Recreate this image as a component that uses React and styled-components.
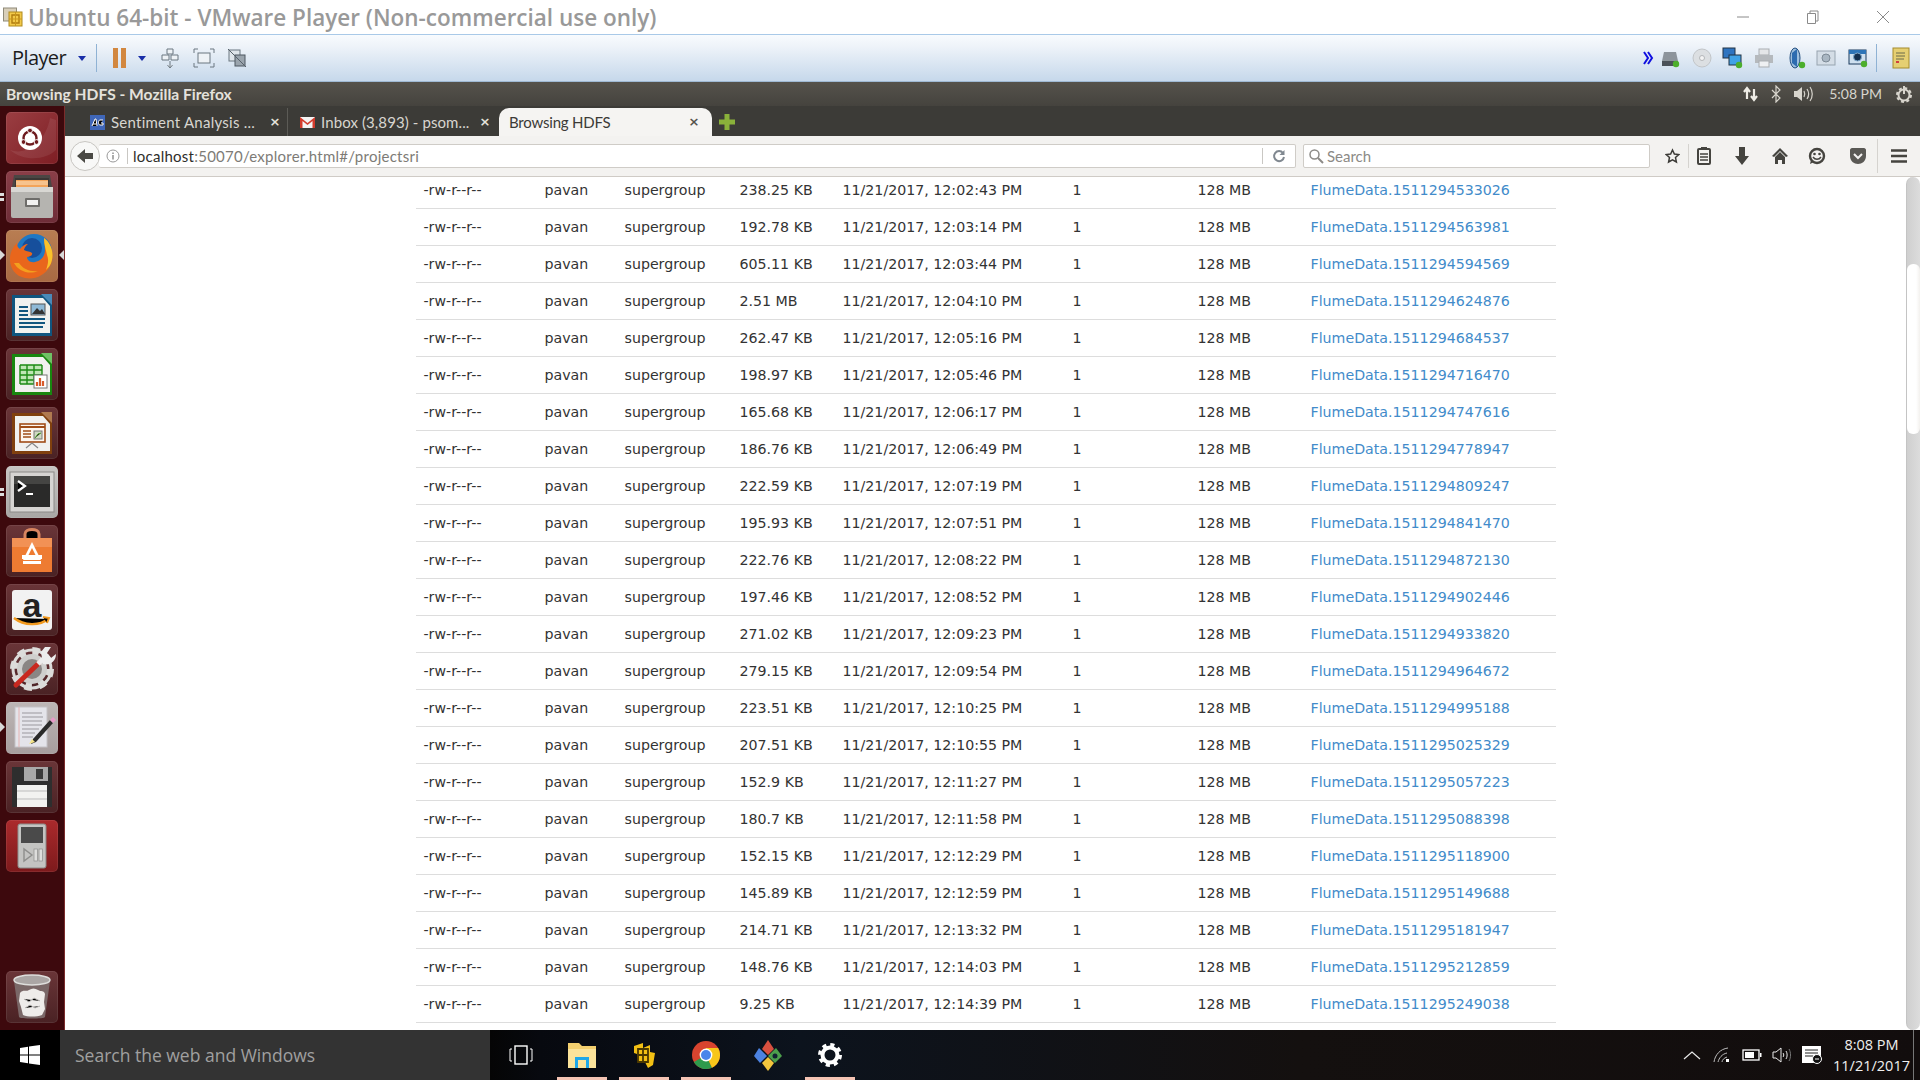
import React from "react";
import styled, {createGlobalStyle} from "styled-components";

const GlobalStyle = createGlobalStyle`
    html, body {
        margin: 0;
        padding: 0;
        width: 1920px;
        height: 1080px;
        overflow: hidden;
        background: #fff;
    }
`;

const uiFont = `"Lato", "Noto Sans", sans-serif`;
const winFont = `"Open Sans", "Noto Sans", sans-serif`;

const Screen = styled.div`
    width: 1920px;
    height: 1080px;
    display: flex;
    flex-direction: column;
    overflow: hidden;
`;

const Spacer = styled.span`
    width: ${props => props.$w}px;
    flex: none;
`;

/* VMware window chrome */
const TitleBar = styled.div`
    height: 34px;
    flex: none;
    display: flex;
    align-items: center;
    padding-left: 3px;
    background: #fff;
    box-sizing: border-box;
`;

const TitleText = styled.div`
    margin-left: 5px;
    padding-top: 2px;
    font: 600 22.5px/32px ${winFont};
    color: #999;
    white-space: nowrap;
`;

const WindowControls = styled.div`
    margin-left: auto;
    display: grid;
    grid-template-columns: repeat(3, 70px);
    justify-items: center;
    margin-right: 2px;
`;

const VmToolbar = styled.div`
    height: 48px;
    flex: none;
    box-sizing: border-box;
    display: flex;
    align-items: center;
    border-top: 1px solid #a9c9e8;
    border-bottom: 1px solid #9fb9d3;
    background: linear-gradient(#f8fbfe, #eef3f9 25%, #c6d8eb);
    padding-left: 12px;
`;

const PlayerLabel = styled.div`
    font: 400 20px/46px ${winFont};
    color: #1c1c1c;
    width: 60px;
    letter-spacing: -0.6px;
`;

const ToolSeparator = styled.div`
    width: 1px;
    height: 28px;
    background: #8fb2d4;
    margin: ${props => props.$margin || "0"};
`;

const DropArrow = styled.div`
    width: 0;
    height: 0;
    border-left: 4px solid transparent;
    border-right: 4px solid transparent;
    border-top: 5px solid #1a2ea8;
    margin: ${props => props.$margin || "0"};
`;

const PauseIcon = styled.div`
    width: 13px;
    height: 20px;
    margin-left: 16px;
    background: linear-gradient(90deg, #d2873f 0 5px, transparent 5px 8px, #d2873f 8px);
`;

const ToolIcon = styled.div`
    width: 22px;
    height: 22px;
    margin: ${props => props.$margin || "0"};
    display: flex;
`;

const VmDevices = styled.div`
    margin-left: auto;
    display: flex;
    align-items: center;
`;

/* guest desktop */
const Guest = styled.div`
    flex: 1;
    min-height: 0;
    display: flex;
    flex-direction: column;
`;

const PanelBar = styled.div`
    height: 24px;
    flex: none;
    display: flex;
    align-items: center;
    padding-left: 6px;
    background: linear-gradient(#55524b, #45433e);
    font: 700 15.6px/24px ${uiFont};
    color: #e4e2dc;
`;

const PanelTray = styled.div`
    margin-left: auto;
    display: flex;
    align-items: center;
    font: 400 14px/24px ${uiFont};
    color: #d8d5cd;
`;

const GuestBody = styled.div`
    flex: 1;
    min-height: 0;
    display: flex;
`;

const Launcher = styled.div`
    width: 65px;
    flex: none;
    box-sizing: border-box;
    padding: 6px 0 7px 6px;
    display: flex;
    flex-direction: column;
    gap: 7px;
    background: #3d090d;
    border-right: 1px solid #7c2b2b;
`;

const Tile = styled.div`
    width: 52px;
    height: 52px;
    flex: none;
    border-radius: 5px;
    position: relative;
    background: ${props => props.$bg || "linear-gradient(#6a3538, #4a2224)"};
    box-shadow: inset 0 0 0 1px rgba(255, 255, 255, 0.08);
    margin-top: ${props => props.$pushDown ? "auto" : "0"};
`;

const TileArt = styled.svg`
    display: block;
    width: 52px;
    height: 52px;
`;

const Pips = styled.div`
    position: absolute;
    left: -6px;
    top: 22px;
    display: flex;
    flex-direction: column;
    gap: 2px;
    &::before, &::after {
        content: "";
        width: 4px;
        height: 3px;
        background: #ddd;
    }
`;

const ArrowLeft = styled.div`
    position: absolute;
    left: -6px;
    top: 20px;
    width: 0;
    height: 0;
    border-top: 5px solid transparent;
    border-bottom: 5px solid transparent;
    border-left: 5px solid #d8d8d8;
`;

const ArrowRight = styled.div`
    position: absolute;
    right: -6px;
    top: 20px;
    width: 0;
    height: 0;
    border-top: 5px solid transparent;
    border-bottom: 5px solid transparent;
    border-right: 5px solid #d8d8d8;
`;

const Browser = styled.div`
    flex: 1;
    min-width: 0;
    display: flex;
    flex-direction: column;
`;

const TabStrip = styled.div`
    height: 30px;
    flex: none;
    display: flex;
    align-items: flex-end;
    background: #3c3b37;
    padding-left: 13px;
    font: 400 15px/27px ${uiFont};
`;

const Tab = styled.div`
    width: ${props => props.$width}px;
    height: 28px;
    flex: none;
    box-sizing: border-box;
    display: flex;
    align-items: center;
    padding-left: ${props => props.$active ? "10px" : "12px"};
    padding-right: ${props => props.$active ? "6px" : "0"};
    color: ${props => props.$active ? "#3c3b37" : "#d8d6d0"};
    background: ${props => props.$active ? "#f5f4f2" : "transparent"};
    border-radius: ${props => props.$active ? "10px 10px 0 0" : "0"};
    margin-left: ${props => props.$active ? "2px" : "0"};
    border-right: ${props => props.$divider ? "1px solid #5c5b56" : "none"};
`;

const TabFavicon = styled.svg`
    width: 15px;
    height: 15px;
    flex: none;
    margin-right: 6px;
`;

const TabTitle = styled.span`
    flex: 1;
    white-space: nowrap;
    letter-spacing: ${props => props.$spacing || 0}px;
`;

const TabClose = styled.span`
    flex: none;
    width: 24px;
    text-align: center;
    font: 700 13px/28px "DejaVu Sans", sans-serif;
    color: ${props => props.$active ? "#55534e" : "#e4e2dc"};
`;

const NewTab = styled.svg`
    width: 16px;
    height: 16px;
    margin: 0 0 6px 7px;
`;

const NavBar = styled.div`
    height: 41px;
    flex: none;
    box-sizing: border-box;
    display: flex;
    align-items: center;
    background: #f3f2f0;
    border-bottom: 1px solid #cfcbc6;
    padding-left: 5px;
`;

const BackButton = styled.div`
    width: 30px;
    height: 30px;
    flex: none;
    box-sizing: border-box;
    border-radius: 50%;
    border: 1px solid #c8c6c2;
    background: #f8f8f7;
    display: flex;
    align-items: center;
    justify-content: center;
    margin-right: -1px;
    position: relative;
    z-index: 1;
`;

const FieldBox = styled.div`
    height: 24px;
    box-sizing: border-box;
    display: flex;
    align-items: center;
    background: #fff;
    border: 1px solid #cfccc7;
    border-radius: 2px;
    font: 400 15px/22px ${uiFont};
    color: #7d7b76;
`;

const UrlBox = styled(FieldBox)`
    width: 1197px;
    padding-left: 7px;
    border-left: none;
    letter-spacing: 0.25px;
`;

const SearchBox = styled(FieldBox)`
    width: 347px;
    margin-left: 7px;
    padding-left: 4px;
    color: #8c8a86;
`;

const InfoIcon = styled.svg`
    width: 14px;
    height: 14px;
    flex: none;
`;

const UrlDivider = styled.div`
    width: 1px;
    height: 16px;
    background: #c9c7c3;
    margin: ${props => props.$margin};
`;

const UrlHost = styled.span`
    color: #2e2d2a;
`;

const NavIcons = styled.div`
    display: flex;
    align-items: center;
    margin-left: 15px;
`;

const NavSlot = styled.div`
    width: ${props => props.$width}px;
    flex: none;
    display: flex;
    justify-content: center;
    align-items: center;
`;

const NavDivider = styled.div`
    width: 1px;
    height: ${props => props.$height || 20}px;
    background: #d5d3cf;
`;

const Page = styled.div`
    flex: 1;
    min-height: 0;
    background: #fff;
    display: flex;
    overflow: hidden;
`;

const PageBody = styled.div`
    flex: 1;
    min-width: 0;
`;

const FileTable = styled.div`
    width: 1140px;
    margin: -5px auto 0;
    font: 400 14.2px/36px "DejaVu Sans", sans-serif;
    color: #333;
`;

const FileRow = styled.div`
    height: 37px;
    box-sizing: border-box;
    display: grid;
    grid-template-columns: 121px 80px 115px 103px 230px 125px 113px 1fr;
    padding-left: 8px;
    border-bottom: 1px solid #ddd;
    white-space: nowrap;
`;

const FileLink = styled.span`
    color: #428bca;
`;

const ScrollTrack = styled.div`
    width: 14px;
    flex: none;
    box-sizing: border-box;
    padding-top: 87px;
    background: linear-gradient(90deg, #cfcfcf, #dcdcdc);
    border-radius: 7px;
    border-left: 1px solid #c4c4c4;
`;

const ScrollThumb = styled.div`
    height: 170px;
    background: linear-gradient(90deg, #fff 70%, #f3f1ee);
    border-radius: 6px;
`;

/* windows taskbar */
const Taskbar = styled.div`
    height: 50px;
    flex: none;
    display: flex;
    align-items: center;
    background: linear-gradient(90deg, #050505 0 490px, #07090f 540px, #0c131d 800px, #14100f 1300px, #120d0d);
`;

const StartButton = styled.div`
    width: 60px;
    height: 50px;
    flex: none;
    background: #000;
    display: flex;
    align-items: center;
    justify-content: center;
`;

const SearchField = styled.div`
    width: 430px;
    height: 50px;
    flex: none;
    box-sizing: border-box;
    padding-left: 15px;
    background: #333;
    color: #a0a0a0;
    font: 400 17.5px/50px ${winFont};
`;

const TaskSlot = styled.div`
    width: ${props => props.$width || 62}px;
    height: 50px;
    flex: none;
    display: flex;
    align-items: center;
    justify-content: center;
    position: relative;
    ${props => props.$open && `
        &::after {
            content: "";
            position: absolute;
            left: 6px;
            right: 6px;
            bottom: 0;
            height: 3px;
            background: #f4c4b4;
        }
    `}
`;

const TaskIcons = styled.div`
    display: flex;
`;

const SysTray = styled.div`
    margin-left: auto;
    display: flex;
    align-items: center;
    height: 50px;
    padding-right: 6px;
`;

const TraySlot = styled.div`
    width: 30px;
    display: flex;
    justify-content: center;
`;

const Clock = styled.div`
    width: 84px;
    margin-left: 3px;
    text-align: center;
    font: 400 14.5px/21px ${winFont};
    color: #f0f0f0;
    border-right: 1px solid #777;
    height: 50px;
    box-sizing: border-box;
    padding-top: 4px;
    white-space: nowrap;
`;

const Sp = ({w = 22, h = 22, vb, children}) => (
    <svg width={w} height={h} viewBox={vb || `0 0 ${w} ${h}`} fill="none">{children}</svg>
);

/* launcher art */
const UbuntuArt = () => (
    <TileArt viewBox="0 0 52 52">
        <path d="M4 38C20 44 40 30 44 6l6 2v30c-10 10-32 12-46 0z" fill="#fff" opacity=".08"/>
        <circle cx="24" cy="26" r="12" fill="#fff"/>
        <circle cx="24" cy="26" r="6.500" fill="none" stroke="#6e1a1e" strokeWidth="2.400"/>
        <circle cx="24" cy="18.500" r="2.400" fill="#6e1a1e" stroke="#fff"/>
        <circle cx="17.500" cy="30" r="2.400" fill="#6e1a1e" stroke="#fff"/>
        <circle cx="30.500" cy="30" r="2.400" fill="#6e1a1e" stroke="#fff"/>
    </TileArt>
);

const FilesArt = () => (
    <TileArt viewBox="0 0 52 52">
        <path d="M8 4h36l2 12H6z" fill="#4a4644"/>
        <path d="M9 7h34v9H9z" fill="#3a3634"/>
        <path d="M10 9h32v7H10z" fill="#f2a45a"/>
        <path d="M10 11h32M10 13h32" stroke="#fbe2c0" strokeWidth="1"/>
        <rect x="5" y="16" width="42" height="31" rx="2" fill="#b5b4b0"/>
        <rect x="5" y="16" width="42" height="5" fill="#d8d7d3"/>
        <rect x="19" y="27" width="15" height="9" rx="1" fill="#6e6d6a"/>
        <rect x="21" y="29" width="11" height="5" fill="#f1f1f0"/>
    </TileArt>
);

const FirefoxArt = () => (
    <TileArt viewBox="0 0 52 52">
        <circle cx="28" cy="22" r="18" fill="#1f78c4"/>
        <circle cx="26" cy="18" r="10" fill="#164f9c"/>
        <path d="M38 8c8 6 11 18 6 28-5 10-16 14-25 12C9 46 3 37 4 27c1-7 4-11 7-14 0 3 1 5 3 6 2-3 5-5 8-5-3 2-4 5-4 6 3 2 6 1 8 3 1 2-2 4-5 4 0 3 3 6 8 5 6-1 10-6 10-12 0-5-1-9-1-12z" fill="#e9661c"/>
        <path d="M38 8c6 4 10 13 8 22-1 5-4 8-6 10 2-6 3-10 1-15-1-5-3-10-3-17z" fill="#f9c22b"/>
        <path d="M8 33c4 8 15 12 24 8-8 1-15-2-19-8z" fill="#f3a01e"/>
    </TileArt>
);

const OfficeArt = ({edge, corner, children}) => (
    <TileArt viewBox="0 0 52 52">
        <path d="M6 6h34l6 6v35H6z" fill={edge}/>
        <path d="M9 9h28l7 8v27H9z" fill="#f1f1ef"/>
        <path d="M35 5h11v11z" fill={corner}/>
        {children}
    </TileArt>
);

const WriterArt = () => (
    <OfficeArt edge="#10557f" corner="#4a8ab8">
        <path d="M13 18h9M13 22h9M13 26h9M13 30h26M13 34h26M13 38h24" stroke="#11567f" strokeWidth="2"/>
        <rect x="25" y="15" width="14" height="11" fill="#8fb9d6" stroke="#555"/>
        <path d="M26 25l5-6 3 3 2-2 3 5z" fill="#333"/>
    </OfficeArt>
);

const CalcArt = () => (
    <OfficeArt edge="#18870f" corner="#6fc265">
        <path d="M14 17h22v19H14z" fill="#bfe6b5"/>
        <path d="M14 17h22M14 22h22M14 27h22M14 32h22M14 36h22M14 17v19M21 17v19M28 17v19M36 17v19" stroke="#1c8a14" strokeWidth="1.400"/>
        <rect x="28" y="27" width="13" height="13" fill="#fff" stroke="#777"/>
        <path d="M31 38v-4M34 38v-8M37 38v-5" strokeWidth="2.200" stroke="#d85a2a"/>
    </OfficeArt>
);

const ImpressArt = () => (
    <OfficeArt edge="#80400e" corner="#b07a50">
        <rect x="14" y="17" width="25" height="18" fill="#fdf6ee" stroke="#a04d17" strokeWidth="1.600"/>
        <path d="M14 20h25" stroke="#a04d17" strokeWidth="2"/>
        <path d="M17 24h8M17 27h8M17 30h8" stroke="#a04d17" strokeWidth="1.600"/>
        <rect x="28" y="24" width="8" height="8" fill="#cfd9c2" stroke="#777"/>
        <path d="M29 31l3-4 3-1" stroke="#4a9a2a"/>
        <path d="M26 36l-6 5M26 36l6 5" stroke="#888" strokeWidth="1.200"/>
    </OfficeArt>
);

const TerminalArt = () => (
    <TileArt viewBox="0 0 52 52">
        <rect x="4" y="6" width="44" height="40" fill="#d6d4d2" stroke="#8c8a88"/>
        <rect x="8" y="10" width="36" height="31" fill="#2a2a29"/>
        <path d="M8 10h36v8H8z" fill="#454543"/>
        <path d="M12 15l7 5-7 5" stroke="#fff" strokeWidth="2.200"/>
        <path d="M20 28h7" stroke="#fff" strokeWidth="2"/>
    </TileArt>
);

const SoftwareArt = () => (
    <TileArt viewBox="0 0 52 52">
        <path d="M19 14v-5c0-6 14-6 14 0v5" stroke="#d88560" strokeWidth="3"/>
        <path d="M6 13h40v34H6z" fill="#ee7b32"/>
        <path d="M6 13h40v9H6z" fill="#f29155"/>
        <path d="M26 17l9 18h-18z" fill="#fff"/>
        <path d="M26 23l4 8h-8z" fill="#ee7b32"/>
        <rect x="16" y="30" width="20" height="4" fill="#fff"/>
        <rect x="17" y="36" width="18" height="3" fill="#fff"/>
    </TileArt>
);

const AmazonArt = () => (
    <TileArt viewBox="0 0 52 52">
        <rect x="6" y="6" width="40" height="40" rx="3" fill="#f2f2f2"/>
        <text x="26" y="33" textAnchor="middle" fontFamily="Liberation Sans" fontWeight="700" fontSize="34" fill="#222">a</text>
        <path d="M8 34c10 8 26 8 34 1" stroke="#f29a1f" strokeWidth="2.400"/>
        <path d="M37 33l6 1-2 5" stroke="#f29a1f" strokeWidth="2"/>
    </TileArt>
);

const SettingsArt = () => (
    <TileArt viewBox="0 0 52 52">
        <circle cx="26" cy="26" r="19" fill="none" stroke="#dcdcda" strokeWidth="3"/>
        <circle cx="26" cy="26" r="18" fill="none" stroke="#dcdcda" strokeWidth="8" strokeDasharray="7 7.100"/>
        <circle cx="26" cy="26" r="15" fill="#cfcfcd"/>
        <circle cx="26" cy="26" r="10" fill="#8a8684"/>
        <path d="M10 42l23-22" stroke="#c8281f" strokeWidth="5" strokeLinecap="round"/>
        <path d="M32 21l5-5" stroke="#ececec" strokeWidth="5"/>
        <path d="M35 9l4-5 6 0-4 6 4 5 5-4c0 7-6 12-13 10z" fill="#ececec"/>
    </TileArt>
);

const EditorArt = () => (
    <TileArt viewBox="0 0 52 52">
        <rect x="9" y="5" width="32" height="40" fill="#e4e4ea" stroke="#c4c2c6"/>
        <path d="M13 5v40" stroke="#e6b4b4"/>
        <path d="M16 11h20M16 15h21M16 19h20M16 23h20M16 27h17M16 31h13M16 35h11" stroke="#9a989e"/>
        <path d="M27 37l17-19 3 3-17 19-5 2z" fill="#2a2a2a"/>
        <path d="M44 18l3-3 3 3-3 3z" fill="#e79ac8"/>
        <path d="M26 37l3 3-6 2z" fill="#f3e38a"/>
    </TileArt>
);

const FloppyArt = () => (
    <TileArt viewBox="0 0 52 52">
        <path d="M6 6h40v40H6z" fill="#2e2e2e"/>
        <rect x="18" y="6" width="24" height="14" fill="#a8a8a8"/>
        <rect x="30" y="8" width="7" height="10" fill="#3a3a3a"/>
        <rect x="11" y="24" width="30" height="22" fill="#f2f2f0"/>
        <path d="M11 30h30M11 38h30" stroke="#bbb"/>
    </TileArt>
);

const PlayerArt = () => (
    <TileArt viewBox="0 0 52 52">
        <rect x="12" y="4" width="28" height="44" rx="2" fill="#c4c4c2" stroke="#8a8a88"/>
        <rect x="15" y="7" width="22" height="16" fill="#4a4a4a"/>
        <path d="M18 29v12l8-6z" fill="none" stroke="#8e8e8c" strokeWidth="1.400"/>
        <rect x="28" y="29" width="3.500" height="12" fill="#dededc" stroke="#8e8e8c" strokeWidth=".7"/>
        <rect x="33" y="29" width="3.500" height="12" fill="#dededc" stroke="#8e8e8c" strokeWidth=".7"/>
    </TileArt>
);

const TrashArt = () => (
    <TileArt viewBox="0 0 52 52">
        <path d="M8 10l5 36c0 2 26 2 26 0l5-36z" fill="#7a6868"/>
        <ellipse cx="26" cy="9" rx="18" ry="5" fill="#aba6a5" stroke="#dededc" strokeWidth="1.500"/>
        <path d="M14 22c3-4 6-1 9-3s6-2 9 0 6 0 7 4l-1 8 1 7-3 6c-6 2-14 2-19 0l-2-8-2-6z" fill="#eeecea"/>
        <path d="M18 28l5 3 5-4 6 3M19 37l5-3 5 3 5-2" stroke="#bcbab8"/>
    </TileArt>
);

const launcherItems = [
    {art: UbuntuArt, bg: "linear-gradient(135deg, #9a3e42, #7e1e24)"},
    {art: FilesArt, bg: "linear-gradient(#8a3e48, #6e2d38)", pips: true},
    {art: FirefoxArt, bg: "linear-gradient(#b87d52, #a96a43)", active: true},
    {art: WriterArt},
    {art: CalcArt},
    {art: ImpressArt},
    {art: TerminalArt, bg: "linear-gradient(#c8c6c4, #a8a6a4)", pips: true},
    {art: SoftwareArt},
    {art: AmazonArt},
    {art: SettingsArt},
    {art: EditorArt, bg: "linear-gradient(#bdb6b6, #a79e9e)", arrow: true},
    {art: FloppyArt},
    {art: PlayerArt, bg: "linear-gradient(#ab2a2c, #7d1a1c)"},
    {art: TrashArt, pushDown: true},
];

const rows = [
    ["238.25 KB", "12:02:43", "1511294533026"],
    ["192.78 KB", "12:03:14", "1511294563981"],
    ["605.11 KB", "12:03:44", "1511294594569"],
    ["2.51 MB", "12:04:10", "1511294624876"],
    ["262.47 KB", "12:05:16", "1511294684537"],
    ["198.97 KB", "12:05:46", "1511294716470"],
    ["165.68 KB", "12:06:17", "1511294747616"],
    ["186.76 KB", "12:06:49", "1511294778947"],
    ["222.59 KB", "12:07:19", "1511294809247"],
    ["195.93 KB", "12:07:51", "1511294841470"],
    ["222.76 KB", "12:08:22", "1511294872130"],
    ["197.46 KB", "12:08:52", "1511294902446"],
    ["271.02 KB", "12:09:23", "1511294933820"],
    ["279.15 KB", "12:09:54", "1511294964672"],
    ["223.51 KB", "12:10:25", "1511294995188"],
    ["207.51 KB", "12:10:55", "1511295025329"],
    ["152.9 KB", "12:11:27", "1511295057223"],
    ["180.7 KB", "12:11:58", "1511295088398"],
    ["152.15 KB", "12:12:29", "1511295118900"],
    ["145.89 KB", "12:12:59", "1511295149688"],
    ["214.71 KB", "12:13:32", "1511295181947"],
    ["148.76 KB", "12:14:03", "1511295212859"],
    ["9.25 KB", "12:14:39", "1511295249038"],
];

const VmLogo = () => (
    <Sp w={20} h={20}>
        <rect x="0.5" y="1" width="13" height="13" fill="#d8cfba" stroke="#8f8a78"/>
        <rect x="6" y="5" width="13" height="14" fill="#f2c94a" stroke="#b08a1c"/>
        <path d="M9 8h7v8H9z" stroke="#b07c10" strokeWidth="1.400"/>
        <path d="M6 12h13M12.500 5v14" stroke="#c9971e"/>
    </Sp>
);

const DeviceStrip = () => (
    <VmDevices>
        <Sp w={12} h={16}>
            <path d="M2 2l4 6-4 6M6 2l4 6-4 6" stroke="#1010e0" strokeWidth="2"/>
        </Sp>
        <ToolIcon $margin="0 0 0 5px">
            <Sp>
                <path d="M5 5h12l2 9H3z" fill="#8d949b"/>
                <rect x="3" y="14" width="16" height="5" fill="#4b5159"/>
                <circle cx="17" cy="17" r="3.200" fill="#4cae2c"/>
            </Sp>
        </ToolIcon>
        <ToolIcon $margin="0 0 0 10px">
            <Sp>
                <circle cx="11" cy="11" r="9" fill="#dcdfe2" stroke="#c2c5c8"/>
                <circle cx="11" cy="11" r="2.500" fill="#f4f4f4" stroke="#b4b7ba"/>
            </Sp>
        </ToolIcon>
        <ToolIcon $margin="0 0 0 9px">
            <Sp>
                <rect x="1" y="1" width="12" height="10" fill="#2f74c0" stroke="#234"/>
                <rect x="7" y="8" width="12" height="10" fill="#41a2e6" stroke="#234"/>
                <circle cx="17" cy="18" r="3.200" fill="#4cae2c"/>
            </Sp>
        </ToolIcon>
        <ToolIcon $margin="0 0 0 9px">
            <Sp>
                <rect x="6" y="2" width="10" height="6" fill="#e4e6e8" stroke="#a9adb1"/>
                <rect x="2" y="8" width="18" height="8" fill="#b5b9bd"/>
                <rect x="6" y="14" width="10" height="6" fill="#eef0f2" stroke="#a9adb1"/>
            </Sp>
        </ToolIcon>
        <ToolIcon $margin="0 0 0 10px">
            <Sp>
                <ellipse cx="10" cy="11" rx="5" ry="10" fill="#9fc0de" stroke="#234f80"/>
                <path d="M7 6l5-4v18l-5-4z" fill="#2d6cb0"/>
                <circle cx="17" cy="18" r="3.200" fill="#4cae2c"/>
            </Sp>
        </ToolIcon>
        <ToolIcon $margin="0 0 0 8px">
            <Sp>
                <rect x="2" y="4" width="18" height="14" fill="#d4dde6" stroke="#97a4b0"/>
                <circle cx="11" cy="11" r="4" fill="#a9b6c2" stroke="#7d8a96"/>
            </Sp>
        </ToolIcon>
        <ToolIcon $margin="0 0 0 10px">
            <Sp>
                <rect x="2" y="3" width="17" height="14" fill="#cfe0ef" stroke="#1b3a5c"/>
                <rect x="2" y="3" width="17" height="4" fill="#2e75b8"/>
                <circle cx="10.500" cy="10" r="4" fill="#14304f" stroke="#7fa9cc"/>
                <circle cx="17" cy="17" r="3.200" fill="#4cae2c"/>
            </Sp>
        </ToolIcon>
        <ToolSeparator $margin="0 0 0 7px"/>
        <ToolIcon $margin="0 7px 0 14px">
            <Sp>
                <rect x="2" y="1" width="16" height="20" fill="#e5cf72" stroke="#a68c2c"/>
                <path d="M5 6h9M5 9h9M5 12h8" stroke="#6b6b4b"/>
                <path d="M5 15h3" stroke="#d04040" strokeWidth="2"/>
            </Sp>
        </ToolIcon>
    </VmDevices>
);

const PanelIcons = () => (
    <PanelTray>
        <Sp w={16} h={18}>
            <path d="M4 14V4M1 7l3-4 3 4" stroke="#efede6" strokeWidth="2.200"/>
            <path d="M11 4v10M8 11l3 4 3-4" stroke="#efede6" strokeWidth="2.200"/>
        </Sp>
        <Spacer $w={11}/>
        <Sp w={12} h={18}>
            <path d="M2 5l8 8-4 4V1l4 4-8 8" stroke="#d8d5cd" strokeWidth="1.200"/>
        </Sp>
        <Spacer $w={11}/>
        <Sp w={20} h={18}>
            <path d="M1 6h3l5-4v14l-5-4H1z" fill="#d8d5cd"/>
            <path d="M11 6c1 2 1 4 0 6M14 4c2 3 2 7 0 10M17 2c3 4 3 10 0 14" stroke="#d8d5cd" strokeWidth="1.200"/>
        </Sp>
        <Spacer $w={16}/>
        <span>5:08 PM</span>
        <Spacer $w={13}/>
        <Sp w={18} h={18}>
            <circle cx="9" cy="10" r="5.500" stroke="#d8d5cd" strokeWidth="2"/>
            <circle cx="9" cy="10" r="7" stroke="#d8d5cd" strokeWidth="2" strokeDasharray="3 2.500"/>
            <path d="M9 1v8" stroke="#d8d5cd" strokeWidth="2"/>
        </Sp>
        <Spacer $w={7}/>
    </PanelTray>
);

const NavStrip = () => (
    <NavIcons>
        <NavSlot $width={15}>
            <Sp w={20} h={20}>
                <path d="M10 2l2.500 5.400 5.800.7-4.300 4 1.200 5.800L10 15l-5.200 2.900L6 12 1.700 8.100l5.800-.7z" stroke="#3c3b37" strokeWidth="2"/>
            </Sp>
        </NavSlot>
        <NavSlot $width={8}/>
        <NavDivider $height={24}/>
        <NavSlot $width={30}>
            <Sp w={16} h={20}>
                <rect x="2" y="3" width="12" height="15" rx="1" stroke="#45443f" strokeWidth="2"/>
                <rect x="5" y="1" width="6" height="3" fill="#45443f"/>
                <path d="M4 8h8M4 11h8M4 14h8" stroke="#45443f" strokeWidth="1.500"/>
            </Sp>
        </NavSlot>
        <NavSlot $width={46}>
            <Sp w={16} h={20}>
                <path d="M5 1h6v9h4l-7 9-7-9h4z" fill="#45443f"/>
            </Sp>
        </NavSlot>
        <NavSlot $width={30}>
            <Sp w={18} h={18}>
                <path d="M9 1L1 9l2 1 6-6 6 6 2-1z" fill="#45443f"/>
                <path d="M4 10l5-5 5 5v7h-3v-4H7v4H4z" fill="#45443f"/>
            </Sp>
        </NavSlot>
        <NavSlot $width={44}>
            <Sp w={18} h={18}>
                <circle cx="9" cy="9" r="7" stroke="#45443f" strokeWidth="2.400"/>
                <circle cx="6.500" cy="7" r="1.300" fill="#45443f"/>
                <circle cx="11.500" cy="7" r="1.300" fill="#45443f"/>
                <path d="M5 10c2 3 6 3 8 0" stroke="#45443f" strokeWidth="1.400"/>
                <path d="M3 13l-1 4 4-2z" fill="#45443f"/>
            </Sp>
        </NavSlot>
        <NavSlot $width={38}>
            <Sp w={18} h={18}>
                <path d="M1 3c0-1 1-2 2-2h12c1 0 2 1 2 2v6c0 5-4 8-8 8s-8-3-8-8z" fill="#5a5955"/>
                <path d="M5 7l4 4 4-4" stroke="#f3f2f0" strokeWidth="2"/>
            </Sp>
        </NavSlot>
        <NavDivider $height={34}/>
        <NavSlot $width={42}>
            <Sp w={18} h={16}>
                <path d="M1 2.500h16M1 8h16M1 13.500h16" stroke="#45443f" strokeWidth="2.600"/>
            </Sp>
        </NavSlot>
    </NavIcons>
);

const App = () => {
    return (
        <Screen>
            <GlobalStyle/>
            <TitleBar>
                <VmLogo/>
                <TitleText>Ubuntu 64-bit - VMware Player (Non-commercial use only)</TitleText>
                <WindowControls>
                    <Sp w={14} h={14}><path d="M1 7h12" stroke="#8a8a8a"/></Sp>
                    <Sp w={14} h={14}><path d="M1.500 3.500h8v10h-8zM4 3V1h8v10h-2" stroke="#8a8a8a"/></Sp>
                    <Sp w={14} h={14}><path d="M1 1l12 12M13 1L1 13" stroke="#8a8a8a"/></Sp>
                </WindowControls>
            </TitleBar>
            <VmToolbar>
                <PlayerLabel>Player</PlayerLabel>
                <DropArrow $margin="0 0 0 6px"/>
                <ToolSeparator $margin="0 0 0 10px"/>
                <PauseIcon/>
                <DropArrow $margin="0 0 0 12px"/>
                <ToolIcon $margin="0 0 0 13px">
                    <Sp>
                        <path d="M8 2h6v5H8zM3 8h7v5H3zM12 8h7v5h-7zM11 14v6M8.500 18l2.500 3 2.500-3" stroke="#6b7780" fill="#eef2f6"/>
                    </Sp>
                </ToolIcon>
                <ToolIcon $margin="0 0 0 12px">
                    <Sp>
                        <rect x="5" y="6" width="12" height="10" stroke="#6b7780" fill="#eef2f6"/>
                        <path d="M1 6V2h4M17 2h4v4M21 16v4h-4M5 20H1v-4" stroke="#6b7780"/>
                    </Sp>
                </ToolIcon>
                <ToolIcon $margin="0 0 0 11px">
                    <Sp>
                        <rect x="3" y="3" width="11" height="11" stroke="#6b7780" fill="#dfe5ea"/>
                        <rect x="9" y="8" width="10" height="11" stroke="#4d5760" fill="#9aa4ad"/>
                        <path d="M2 2l18 18" stroke="#57616a"/>
                    </Sp>
                </ToolIcon>
                <DeviceStrip/>
            </VmToolbar>
            <Guest>
                <PanelBar>
                    Browsing HDFS - Mozilla Firefox
                    <PanelIcons/>
                </PanelBar>
                <GuestBody>
                    <Launcher>
                        {launcherItems.map(({art: Art, bg, pips, active, arrow, pushDown}, i) => (
                            <Tile key={i} $bg={bg} $pushDown={pushDown}>
                                <Art/>
                                {pips && <Pips/>}
                                {(active || arrow) && <ArrowLeft/>}
                                {active && <ArrowRight/>}
                            </Tile>
                        ))}
                    </Launcher>
                    <Browser>
                        <TabStrip>
                            <Tab $width={210} $divider>
                                <TabFavicon viewBox="0 0 15 15">
                                    <rect width="15" height="15" fill="#3f66b8"/>
                                    <path d="M2 11l3-7h1l1 7M3 9h3M13 5H10c-2 0-2 5 0 5h3V8h-2" stroke="#fff" strokeWidth="1"/>
                                </TabFavicon>
                                <TabTitle $spacing={0.25}>Sentiment Analysis ...</TabTitle>
                                <TabClose>×</TabClose>
                            </Tab>
                            <Tab $width={209}>
                                <TabFavicon viewBox="0 0 15 15">
                                    <rect y="2" width="15" height="11" fill="#f4f4f4"/>
                                    <path d="M0 2l7.500 6L15 2v11h-2.500V6L7.500 10 2.500 6v7H0z" fill="#d33b2c"/>
                                </TabFavicon>
                                <TabTitle $spacing={0.1}>Inbox (3,893) - psom...</TabTitle>
                                <TabClose>×</TabClose>
                            </Tab>
                            <Tab $width={213} $active>
                                <TabTitle $spacing={-0.2}>Browsing HDFS</TabTitle>
                                <TabClose $active>×</TabClose>
                            </Tab>
                            <NewTab viewBox="0 0 16 16">
                                <path d="M5.500 0h5v5.500H16v5h-5.500V16h-5v-5.500H0v-5h5.500z" fill="#8ab13a"/>
                            </NewTab>
                        </TabStrip>
                        <NavBar>
                            <BackButton>
                                <Sp w={16} h={14}>
                                    <path d="M8 0v4h8v6H8v4L0 7z" fill="#4a4945"/>
                                </Sp>
                            </BackButton>
                            <UrlBox>
                                <InfoIcon viewBox="0 0 14 14">
                                    <circle cx="7" cy="7" r="6" fill="none" stroke="#999"/>
                                    <path d="M7 6v4.500M7 3.500v1.500" stroke="#888" strokeWidth="1.400"/>
                                </InfoIcon>
                                <UrlDivider $margin="0 5px 0 7px"/>
                                <span><UrlHost>localhost</UrlHost>:50070/explorer.html#/projectsri</span>
                                <UrlDivider $margin="0 0 0 auto"/>
                                <NavSlot $width={32}>
                                    <Sp w={14} h={14}>
                                        <path d="M11 4a5 5 0 1 0 1 4" stroke="#808890" strokeWidth="2"/>
                                        <path d="M12.500 1v5h-5z" fill="#808890"/>
                                    </Sp>
                                </NavSlot>
                            </UrlBox>
                            <SearchBox>
                                <Sp w={16} h={16}>
                                    <circle cx="6.500" cy="6.500" r="4.500" stroke="#8c8a86" strokeWidth="1.500"/>
                                    <path d="M10 10l5 5" stroke="#8c8a86" strokeWidth="2"/>
                                </Sp>
                                <Spacer $w={3}/>
                                Search
                            </SearchBox>
                            <NavStrip/>
                        </NavBar>
                        <Page>
                            <PageBody>
                                <FileTable>
                                    {rows.map(([size, time, id]) => (
                                        <FileRow key={id}>
                                            <div>-rw-r--r--</div>
                                            <div>pavan</div>
                                            <div>supergroup</div>
                                            <div>{size}</div>
                                            <div>11/21/2017, {time} PM</div>
                                            <div>1</div>
                                            <div>128 MB</div>
                                            <FileLink>FlumeData.{id}</FileLink>
                                        </FileRow>
                                    ))}
                                </FileTable>
                            </PageBody>
                            <ScrollTrack>
                                <ScrollThumb/>
                            </ScrollTrack>
                        </Page>
                    </Browser>
                </GuestBody>
            </Guest>
            <Taskbar>
                <StartButton>
                    <Sp w={20} h={20}>
                        <path d="M0 3l8-1.200V9.500H0zM9 1.600L20 0v9.500H9zM0 10.500h8v7.700L0 17zM9 10.500h11V20L9 18.400z" fill="#fff"/>
                    </Sp>
                </StartButton>
                <SearchField>Search the web and Windows</SearchField>
                <TaskIcons>
                    <TaskSlot $width={61}>
                        <Sp w={26} h={20}>
                            <rect x="7" y="1" width="12" height="18" stroke="#fff" strokeWidth="1.400"/>
                            <path d="M4 4H2v12h2M22 4h2v12h-2" stroke="#fff"/>
                        </Sp>
                    </TaskSlot>
                    <TaskSlot $open>
                        <Sp w={30} h={30}>
                            <path d="M1 3h11l3 3h14v22H1z" fill="#f3cf6e"/>
                            <path d="M1 9h28v19H1z" fill="#fbe39a"/>
                            <path d="M8 28V17h14v11h-3v-8h-8v8z" fill="#1ea7e8"/>
                        </Sp>
                    </TaskSlot>
                    <TaskSlot $open>
                        <Sp w={26} h={30}>
                            <path d="M3 6l9-3v5l7-3v7l5 1-2 12-5 3-3-6h-7l-1-8-3-1z" fill="#f2c014"/>
                            <path d="M7 9h10v13H7zM12 9v13M7 15h10" stroke="#4a3800" strokeWidth="1.800"/>
                        </Sp>
                    </TaskSlot>
                    <TaskSlot $open>
                        <Sp w={28} h={28}>
                            <circle cx="14" cy="14" r="14" fill="#d8442f"/>
                            <path d="M14 14L1.900 21A14 14 0 0 0 20 26.700z" fill="#2e9b4c"/>
                            <path d="M14 14l6 12.700A14 14 0 0 0 26.100 7H14z" fill="#f8c61a"/>
                            <circle cx="14" cy="14" r="6.400" fill="#fff"/>
                            <circle cx="14" cy="14" r="5" fill="#4a85ea"/>
                        </Sp>
                    </TaskSlot>
                    <TaskSlot>
                        <Sp w={30} h={32}>
                            <path d="M15 1l6 9-6 6-6-6z" fill="#d8503f"/>
                            <path d="M6 9l8 8-7 7-6-7z" fill="#4c82e0"/>
                            <path d="M23 9l6 8-7 7-7-7z" fill="#4c9f4c"/>
                            <path d="M15 18l6 6-6 8-6-8z" fill="#f2c53d"/>
                            <circle cx="22" cy="17" r="2.500" fill="#123"/>
                        </Sp>
                    </TaskSlot>
                    <TaskSlot $open>
                        <Sp w={24} h={24}>
                            <circle cx="12" cy="12" r="7.500" stroke="#fff" strokeWidth="4"/>
                            <circle cx="12" cy="12" r="10" stroke="#fff" strokeWidth="4" strokeDasharray="4 3.850"/>
                        </Sp>
                    </TaskSlot>
                </TaskIcons>
                <SysTray>
                    <TraySlot>
                        <Sp w={18} h={10}>
                            <path d="M1 9l8-7 8 7" stroke="#e8e8e8" strokeWidth="1.200"/>
                        </Sp>
                    </TraySlot>
                    <TraySlot>
                        <Sp w={18} h={16}>
                            <path d="M1 15C2 8 7 2 15 1M5 15c1-4 4-8 9-9M9 15c0-2 2-4 5-5" stroke="#bcbcbc"/>
                            <rect x="13" y="12" width="3" height="3" fill="#fff"/>
                        </Sp>
                    </TraySlot>
                    <TraySlot>
                        <Sp w={20} h={12}>
                            <rect x="1" y="1" width="16" height="10" stroke="#fff" strokeWidth="1.300"/>
                            <rect x="3" y="3" width="9" height="6" fill="#fff"/>
                            <rect x="18" y="4" width="1.500" height="4" fill="#fff"/>
                        </Sp>
                    </TraySlot>
                    <TraySlot>
                        <Sp w={20} h={16}>
                            <path d="M1 5h3l5-4v14l-5-4H1z" stroke="#e8e8e8"/>
                            <path d="M11 6c1 1 1 3 0 4M14 4c1.500 2 1.500 6 0 8" stroke="#e8e8e8"/>
                            <path d="M17 2c2 3 2 9 0 12" stroke="#777"/>
                        </Sp>
                    </TraySlot>
                    <TraySlot>
                        <Sp w={22} h={20}>
                            <path d="M1 1h19v13l-5 4H1z" fill="#fff"/>
                            <path d="M4 5h13M4 8h13M4 11h8" stroke="#222"/>
                            <circle cx="16" cy="14" r="4.500" fill="#111" stroke="#fff"/>
                            <path d="M14 14h4" stroke="#fff"/>
                        </Sp>
                    </TraySlot>
                    <Clock>
                        <div>8:08 PM</div>
                        <div>11/21/2017</div>
                    </Clock>
                </SysTray>
            </Taskbar>
        </Screen>
    );
};

export default App;
